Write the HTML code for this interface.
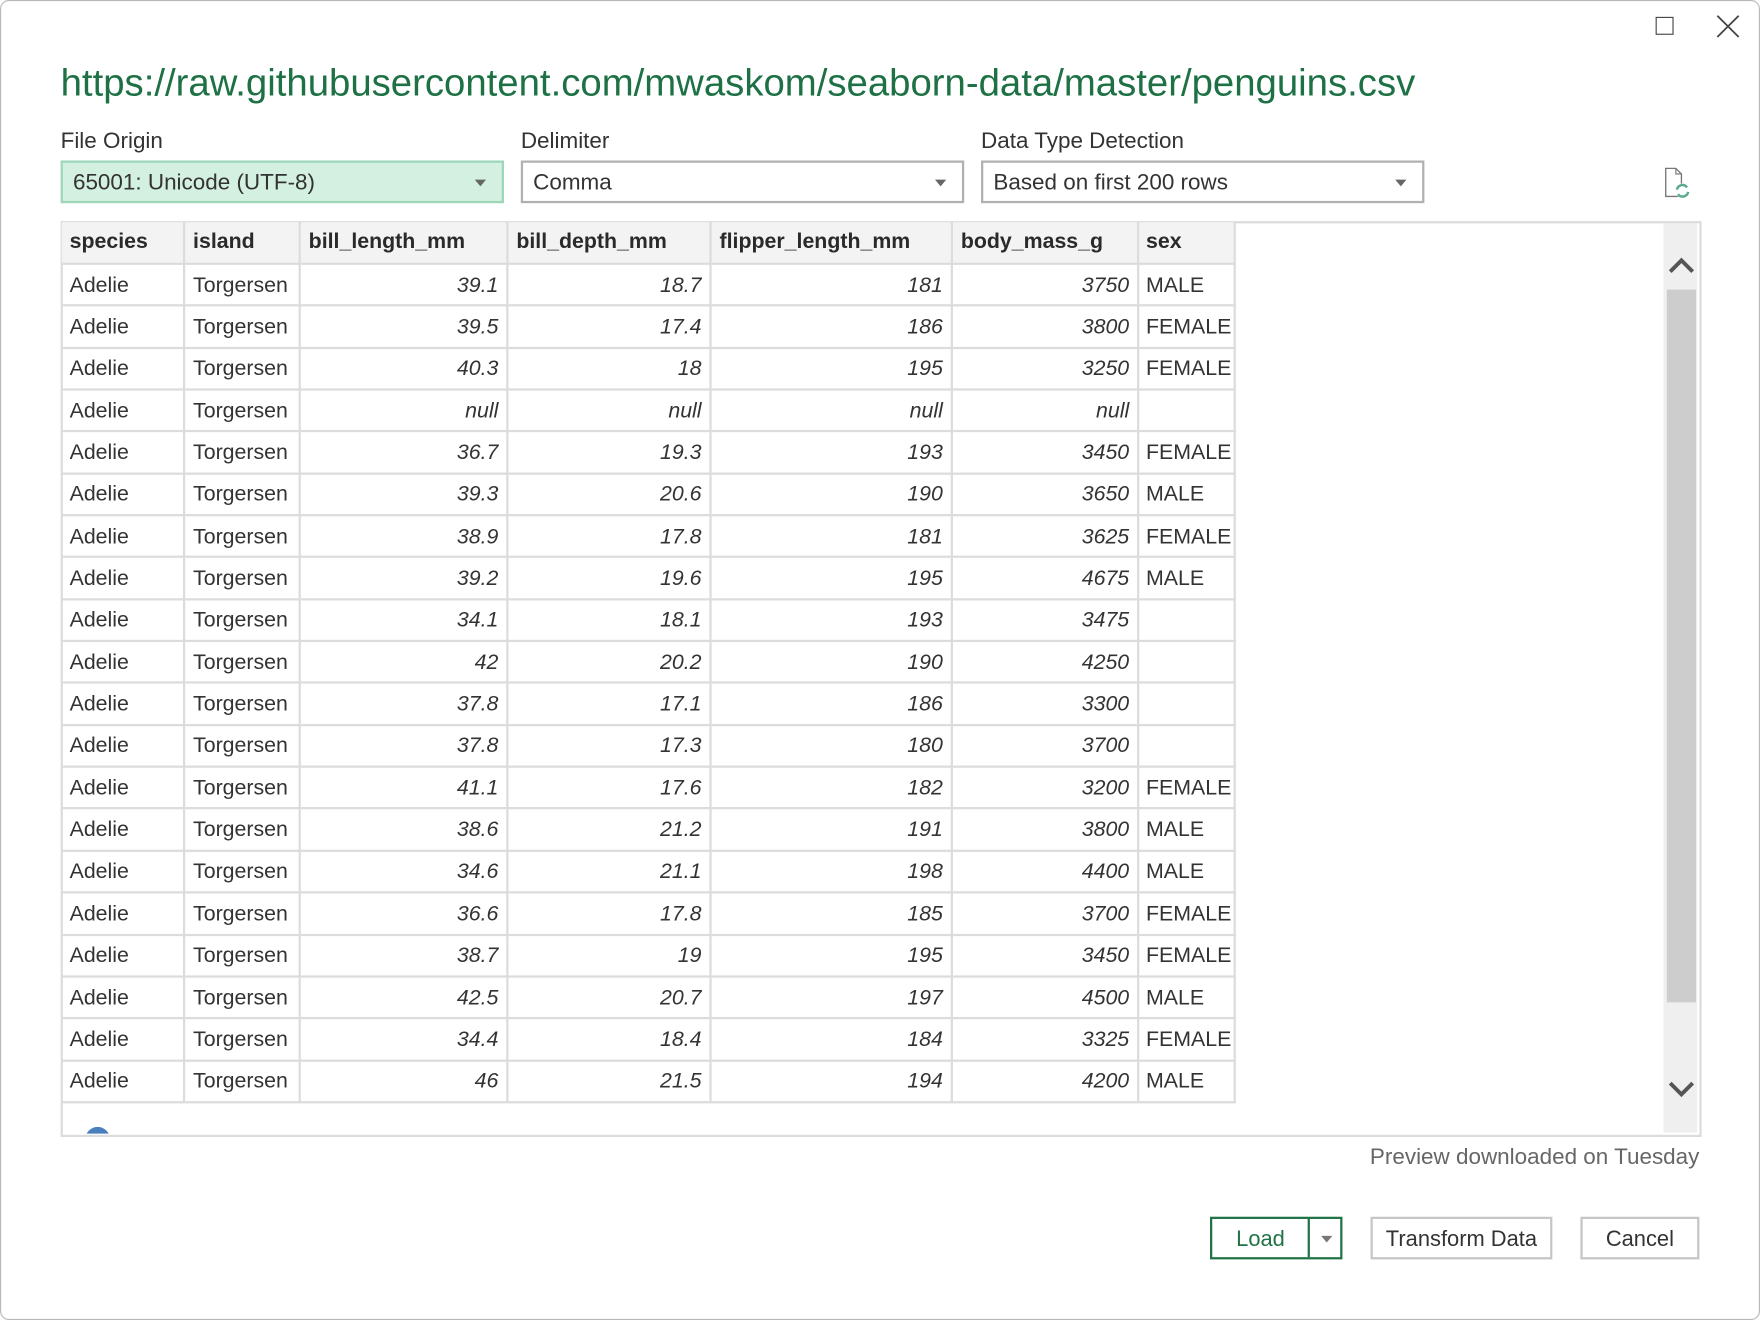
<!DOCTYPE html>
<html><head><meta charset="utf-8"><style>
html,body{margin:0;padding:0;width:1760px;height:1320px;overflow:hidden;background:#fff}
#w{position:absolute;left:0;top:0;width:1568px;height:1176px;transform:scale(1.122449);transform-origin:0 0;font-family:"Liberation Sans",sans-serif;color:#333;background:#fff}
#frame{position:absolute;left:0;top:0;width:1566px;height:1174px;border:1px solid #b8b8b8;border-radius:8px;box-sizing:content-box}
.abs{position:absolute}
.url{left:54px;top:55px;font-size:34.15px;color:#1e7145;white-space:nowrap}
.lbl{font-size:20px;top:115px;color:#333}
.dd{top:143px;height:38px;width:395px;box-sizing:border-box;border:2px solid #b0b0b0;font-size:20px;line-height:36px;padding-left:9px;background:#fff}
.dd:after{content:"";position:absolute;right:14px;top:15px;border-left:5px solid transparent;border-right:5px solid transparent;border-top:6px solid #666}
table{position:absolute;left:55px;top:198px;border-collapse:collapse;font-size:19px;table-layout:fixed;width:1045px}
td,th{border:2px solid #dcdcdc;padding:0 7px;white-space:nowrap;overflow:hidden}
tr{height:37.35px}
tr.h{height:37px}
th{background:#f3f3f3;text-align:left;font-weight:bold;color:#2a2a2a;border-top:none;border-left:none}
td{color:#333;padding-top:2px}
td.n{text-align:right;font-style:italic}
tr td:first-child{border-left:none}
tr td:last-child,tr th:last-child{padding-left:6px;padding-right:0}
.btn{top:1084px;height:38px;box-sizing:border-box;border:2px solid #c6c6c6;font-size:19.5px;line-height:36px;text-align:center;background:#fff}
</style></head><body><div id="w">
<div id="frame"></div>
<div class="abs" style="left:1475px;top:15px;width:14px;height:14px;border:1.5px solid #444"></div>
<svg class="abs" style="left:1529px;top:13px" width="21" height="21"><path d="M1 1L20 20M20 1L1 20" stroke="#444" stroke-width="1.6"/></svg>
<div class="abs url">https://raw.githubusercontent.com/mwaskom/seaborn-data/master/penguins.csv</div>
<div class="abs lbl" style="left:54px">File Origin</div>
<div class="abs lbl" style="left:464px">Delimiter</div>
<div class="abs lbl" style="left:874px">Data Type Detection</div>
<div class="abs dd" style="left:54px;background:#d4f0e0;border-color:#9dd6b8">65001: Unicode (UTF-8)</div>
<div class="abs dd" style="left:464px">Comma</div>
<div class="abs dd" style="left:874px">Based on first 200 rows</div>
<svg class="abs" style="left:1480px;top:148px" width="30" height="32"><path d="M4 2H13L18 7V27H4Z" fill="none" stroke="#777" stroke-width="1.2"/><path d="M13 2V7H18" fill="none" stroke="#777" stroke-width="1"/><circle cx="19" cy="22" r="6.5" fill="#fff"/><path d="M14 21a5 5 0 0 1 9-2M24 23a5 5 0 0 1-9 2" fill="none" stroke="#5aab8a" stroke-width="2.2"/></svg>
<div class="abs" style="left:54px;top:197px;width:1458px;height:812px;border:2px solid #dcdcdc"></div>
<div class="abs" style="left:1482px;top:199px;width:30px;height:810px;background:#efefef"></div>
<div class="abs" style="left:1485px;top:258px;width:26px;height:635px;background:#cdcdcd"></div>
<svg class="abs" style="left:1486px;top:226px" width="24" height="20"><path d="M2 16L12 6L22 16" fill="none" stroke="#555" stroke-width="3.5"/></svg>
<svg class="abs" style="left:1486px;top:961px" width="24" height="20"><path d="M2 4L12 14L22 4" fill="none" stroke="#555" stroke-width="3.5"/></svg>
<div class="abs" style="left:76px;top:1004px;width:22px;height:6px;overflow:hidden"><div style="width:22px;height:22px;border-radius:50%;background:#4a7fbd"></div></div>
<table>
<colgroup><col style="width:109px"><col style="width:103px"><col style="width:185px"><col style="width:181px"><col style="width:215px"><col style="width:166px"><col style="width:86px"></colgroup>
<tr class="h"><th>species</th><th>island</th><th>bill_length_mm</th><th>bill_depth_mm</th><th>flipper_length_mm</th><th>body_mass_g</th><th style="border-right:2px solid #dcdcdc">sex</th></tr>
<tr><td>Adelie</td><td>Torgersen</td><td class="n">39.1</td><td class="n">18.7</td><td class="n">181</td><td class="n">3750</td><td>MALE</td></tr>
<tr><td>Adelie</td><td>Torgersen</td><td class="n">39.5</td><td class="n">17.4</td><td class="n">186</td><td class="n">3800</td><td>FEMALE</td></tr>
<tr><td>Adelie</td><td>Torgersen</td><td class="n">40.3</td><td class="n">18</td><td class="n">195</td><td class="n">3250</td><td>FEMALE</td></tr>
<tr><td>Adelie</td><td>Torgersen</td><td class="n">null</td><td class="n">null</td><td class="n">null</td><td class="n">null</td><td></td></tr>
<tr><td>Adelie</td><td>Torgersen</td><td class="n">36.7</td><td class="n">19.3</td><td class="n">193</td><td class="n">3450</td><td>FEMALE</td></tr>
<tr><td>Adelie</td><td>Torgersen</td><td class="n">39.3</td><td class="n">20.6</td><td class="n">190</td><td class="n">3650</td><td>MALE</td></tr>
<tr><td>Adelie</td><td>Torgersen</td><td class="n">38.9</td><td class="n">17.8</td><td class="n">181</td><td class="n">3625</td><td>FEMALE</td></tr>
<tr><td>Adelie</td><td>Torgersen</td><td class="n">39.2</td><td class="n">19.6</td><td class="n">195</td><td class="n">4675</td><td>MALE</td></tr>
<tr><td>Adelie</td><td>Torgersen</td><td class="n">34.1</td><td class="n">18.1</td><td class="n">193</td><td class="n">3475</td><td></td></tr>
<tr><td>Adelie</td><td>Torgersen</td><td class="n">42</td><td class="n">20.2</td><td class="n">190</td><td class="n">4250</td><td></td></tr>
<tr><td>Adelie</td><td>Torgersen</td><td class="n">37.8</td><td class="n">17.1</td><td class="n">186</td><td class="n">3300</td><td></td></tr>
<tr><td>Adelie</td><td>Torgersen</td><td class="n">37.8</td><td class="n">17.3</td><td class="n">180</td><td class="n">3700</td><td></td></tr>
<tr><td>Adelie</td><td>Torgersen</td><td class="n">41.1</td><td class="n">17.6</td><td class="n">182</td><td class="n">3200</td><td>FEMALE</td></tr>
<tr><td>Adelie</td><td>Torgersen</td><td class="n">38.6</td><td class="n">21.2</td><td class="n">191</td><td class="n">3800</td><td>MALE</td></tr>
<tr><td>Adelie</td><td>Torgersen</td><td class="n">34.6</td><td class="n">21.1</td><td class="n">198</td><td class="n">4400</td><td>MALE</td></tr>
<tr><td>Adelie</td><td>Torgersen</td><td class="n">36.6</td><td class="n">17.8</td><td class="n">185</td><td class="n">3700</td><td>FEMALE</td></tr>
<tr><td>Adelie</td><td>Torgersen</td><td class="n">38.7</td><td class="n">19</td><td class="n">195</td><td class="n">3450</td><td>FEMALE</td></tr>
<tr><td>Adelie</td><td>Torgersen</td><td class="n">42.5</td><td class="n">20.7</td><td class="n">197</td><td class="n">4500</td><td>MALE</td></tr>
<tr><td>Adelie</td><td>Torgersen</td><td class="n">34.4</td><td class="n">18.4</td><td class="n">184</td><td class="n">3325</td><td>FEMALE</td></tr>
<tr><td>Adelie</td><td>Torgersen</td><td class="n">46</td><td class="n">21.5</td><td class="n">194</td><td class="n">4200</td><td>MALE</td></tr>
</table>
<div class="abs" style="right:54px;top:1020px;font-size:20px;color:#666">Preview downloaded on Tuesday</div>
<div class="abs btn" style="left:1078px;width:118px;border-color:#217346;color:#217346;text-align:left">
<span style="display:inline-block;width:86px;text-align:center">Load</span>
<div class="abs" style="left:85px;top:0;width:2px;height:34px;background:#217346"></div>
<div class="abs" style="left:97px;top:15px;border-left:5px solid transparent;border-right:5px solid transparent;border-top:6px solid #777"></div>
</div>
<div class="abs btn" style="left:1221px;width:162px">Transform Data</div>
<div class="abs btn" style="left:1408px;width:106px">Cancel</div>
</div></body></html>
